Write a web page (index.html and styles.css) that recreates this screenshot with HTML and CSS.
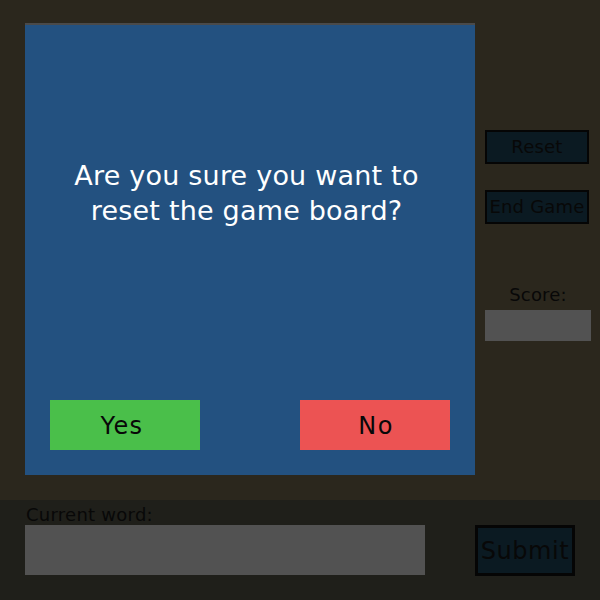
FILE: index.html
```html
<!DOCTYPE html>
<html>
<head>
<meta charset="utf-8">
<link rel="stylesheet" href="styles.css">
</head>
<body>
<div class="top">
  <div class="board-area">
    <div class="modal">
      <p class="question">Are you sure you want to<br>reset the game board?</p>
      <div class="choices">
        <button class="choice yes">Yes</button>
        <button class="choice no">No</button>
      </div>
    </div>
  </div>
  <aside class="sidebar">
    <button class="side-btn">Reset</button>
    <button class="side-btn end">End Game</button>
    <div class="score-label">Score:</div>
    <div class="score-box"></div>
  </aside>
</div>
<div class="bottom">
  <div class="word-label">Current word:</div>
  <div class="word-row">
    <div class="word-input"></div>
    <button class="submit">Submit</button>
  </div>
</div>
</body>
</html>
```

FILE: styles.css
```css
* { box-sizing: border-box; }
html, body { margin: 0; padding: 0; }
body {
  width: 600px;
  height: 600px;
  overflow: hidden;
  font-family: "DejaVu Sans", Verdana, sans-serif;
  color: #080808;
  background: #1f1f1a;
}
button {
  font-family: inherit;
  color: #080808;
  padding: 0;
  margin: 0;
  cursor: pointer;
}
.top {
  height: 500px;
  display: flex;
  background: #2b271d;
}
.board-area {
  padding: 23px 10px 0 25px;
}
.modal {
  width: 450px;
  height: 452px;
  border-top: 2px solid #4a4a4a;
  background: #235180;
  display: flex;
  flex-direction: column;
  padding: 133px 25px 25px;
}
.question {
  margin: 0;
  padding-right: 7px;
  color: #ffffff;
  font-size: 27px;
  line-height: 35px;
  letter-spacing: 0.2px;
  text-align: center;
}
.choices {
  margin-top: auto;
  display: flex;
  justify-content: space-between;
}
.choice {
  width: 150px;
  height: 50px;
  border: none;
  font-size: 24px;
  line-height: 52px;
  letter-spacing: 1.4px;
}
.yes { background: #4abf4a; padding-right: 6px; }
.no { background: #ec5353; padding-left: 2px; }
.sidebar {
  width: 106px;
  padding-top: 130px;
  display: flex;
  flex-direction: column;
  align-items: flex-start;
}
.side-btn {
  width: 104px;
  height: 34px;
  border: 2px solid #050505;
  background: #0b1a22;
  font-size: 18px;
  line-height: 30px;
  letter-spacing: 0.2px;
  white-space: nowrap;
}
.side-btn.end { margin-top: 26px; }
.score-label {
  margin-top: 60px;
  width: 106px;
  font-size: 18px;
  line-height: 21px;
  letter-spacing: 0.2px;
  text-align: center;
}
.score-box {
  margin-top: 5px;
  width: 106px;
  height: 31px;
  background: #525252;
}
.bottom {
  height: 100px;
  padding: 4px 0 0 25px;
  background: #1f1f1a;
}
.word-label {
  margin-left: 1px;
  font-size: 18px;
  line-height: 21px;
  letter-spacing: 0.25px;
}
.word-row {
  display: flex;
  gap: 50px;
}
.word-input {
  width: 400px;
  height: 50px;
  background: #525252;
}
.submit {
  width: 100px;
  height: 51px;
  border: 3px solid #050505;
  background: #0b1a22;
  font-size: 24px;
  line-height: 47px;
  letter-spacing: 0.6px;
}
```
